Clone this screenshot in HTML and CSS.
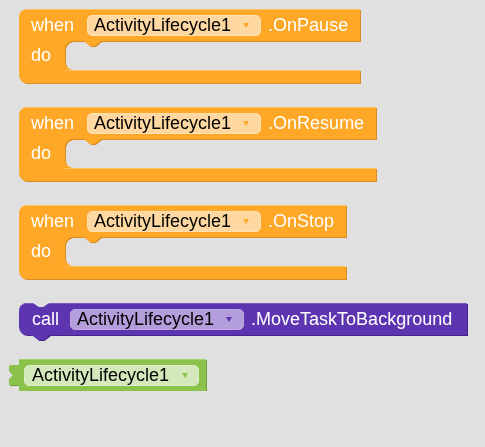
FILE: index.html
```html
<!DOCTYPE html>
<html lang="en">
<head>
  <meta charset="UTF-8">
  <meta name="viewport" content="width=device-width, initial-scale=1.0">
  <title>ActivityLifecycle blocks</title>
  <link rel="stylesheet" href="styles.css">
</head>
<body>
  <div class="workspace">

    <!-- Event blocks -->
    <div class="block event">
      <div class="head">
        <span class="label">when</span>
        <span class="field">ActivityLifecycle1<span class="arrow"></span></span>
        <span class="label">.OnPause</span>
      </div>
      <div class="mid">
        <div class="arm"><span class="label">do</span></div>
        <div class="slot"></div>
      </div>
      <div class="foot"></div>
    </div>

    <div class="block event">
      <div class="head">
        <span class="label">when</span>
        <span class="field">ActivityLifecycle1<span class="arrow"></span></span>
        <span class="label">.OnResume</span>
      </div>
      <div class="mid">
        <div class="arm"><span class="label">do</span></div>
        <div class="slot"></div>
      </div>
      <div class="foot"></div>
    </div>

    <div class="block event">
      <div class="head">
        <span class="label">when</span>
        <span class="field">ActivityLifecycle1<span class="arrow"></span></span>
        <span class="label">.OnStop</span>
      </div>
      <div class="mid">
        <div class="arm"><span class="label">do</span></div>
        <div class="slot"></div>
      </div>
      <div class="foot"></div>
    </div>

    <!-- Method call -->
    <div class="block method">
      <span class="label">call</span>
      <span class="field">ActivityLifecycle1<span class="arrow"></span></span>
      <span class="label">.MoveTaskToBackground</span>
    </div>

    <!-- Component getter -->
    <div class="block component">
      <svg class="tab" width="10" height="20" viewBox="0 0 10 20">
        <path d="M10.5 0 H1 Q0 0 0 1.5 V6 L4 10 L0 14 V18.5 Q0 20 1 20 H10.5 Z" fill="#8bc34a"/>
      </svg>
      <span class="field">ActivityLifecycle1<span class="arrow"></span></span>
    </div>

  </div>
</body>
</html>
```

FILE: styles.css
```css
body {
  margin: 0;
  background-color: #e0e0e0;
  font-family: "Liberation Sans", Arial, sans-serif;
  font-size: 18px;
}
.workspace {
  display: flex;
  flex-direction: column;
  align-items: flex-start;
  gap: 24px;
  padding: 9px 0 0 19px;
}
.block {
  filter: drop-shadow(1px 1px 0 var(--dark));
}
.label {
  color: #fff;
  white-space: nowrap;
}
.field {
  display: inline-flex;
  align-items: center;
  box-sizing: border-box;
  height: 21px;
  padding: 0 11px 0 6px;
  border: 1px solid var(--field-edge);
  border-radius: 5px;
  background-color: var(--field);
  color: #000;
  white-space: nowrap;
}
.arrow {
  width: 0;
  height: 0;
  margin-left: 12px;
  border-left: 3.5px solid transparent;
  border-right: 3.5px solid transparent;
  border-top: 5px solid var(--main);
}

/* event handler: when ... do */
.event {
  --main: #ffa726;
  --dark: #d88d22;
  --light: #ffc163;
  --field: #ffd8a1;
  --field-edge: #ffe0b3;
}
.event .head {
  display: flex;
  align-items: center;
  height: 32px;
  padding: 0 12px 0 12px;
  background-color: var(--main);
  border-radius: 8px 0 0 0;
  box-shadow: inset 0 1px 0 var(--light);
}
.event .field {
  margin: 0 7px 0 13px;
}
.mid {
  display: flex;
  height: 29px;
}
.arm {
  display: flex;
  align-items: center;
  width: 46px;
  box-sizing: border-box;
  padding-left: 12px;
  background-color: var(--main);
}
.slot {
  flex: 1;
  position: relative;
  background:
    radial-gradient(circle at 100% 100%, transparent 7.5px, var(--main) 8px) 0 0 / 8px 8px no-repeat,
    radial-gradient(circle at 100% 0, transparent 7.5px, var(--main) 8px) 0 100% / 8px 8px no-repeat;
}
.slot::before {
  content: "";
  position: absolute;
  top: 0;
  left: 19px;
  width: 17px;
  height: 5px;
  background-color: var(--main);
  clip-path: polygon(0 0, 100% 0, 64% 100%, 36% 100%);
}
.foot {
  height: 13px;
  background-color: var(--main);
  background-image: linear-gradient(var(--light), var(--light));
  background-size: 100% 1px;
  background-position: 46px 0;
  background-repeat: no-repeat;
  border-radius: 0 0 0 8px;
}

/* method call block */
.method {
  --main: #5e35b1;
  --dark: #45258a;
  --light: #7b56c4;
  --field: #b39ddb;
  --field-edge: #bfaae0;
  position: relative;
  display: flex;
  align-items: center;
  height: 32px;
  padding: 0 15px 0 13px;
  background-color: var(--main);
  border-radius: 8px 0 0 8px;
  box-shadow: inset 0 1px 0 var(--light);
}
.method .field {
  margin: 0 7px 0 11px;
}
.method::before {
  content: "";
  position: absolute;
  top: 0;
  left: 14px;
  width: 16px;
  height: 4px;
  background-color: #e0e0e0;
  clip-path: polygon(0 0, 100% 0, 64% 100%, 36% 100%);
}
.method::after {
  content: "";
  position: absolute;
  top: 100%;
  left: 13px;
  width: 18px;
  height: 5px;
  background-color: var(--main);
  clip-path: polygon(0 0, 100% 0, 64% 100%, 36% 100%);
}

/* component getter block */
.component {
  --main: #8bc34a;
  --dark: #6e9d39;
  --light: #a5d46e;
  --field: #d3e8bb;
  --field-edge: #dcedc8;
  display: flex;
  align-items: center;
  height: 32px;
  padding: 0 7px 0 5px;
  background-color: var(--main);
  box-shadow: inset 0 1px 0 var(--light);
}
.tab {
  margin-left: -15px;
  margin-right: 5px;
}
.component .field {
  padding-left: 7px;
  padding-right: 10px;
  margin-left: 0;
}
.component .arrow {
  margin-left: 13px;
}
```
